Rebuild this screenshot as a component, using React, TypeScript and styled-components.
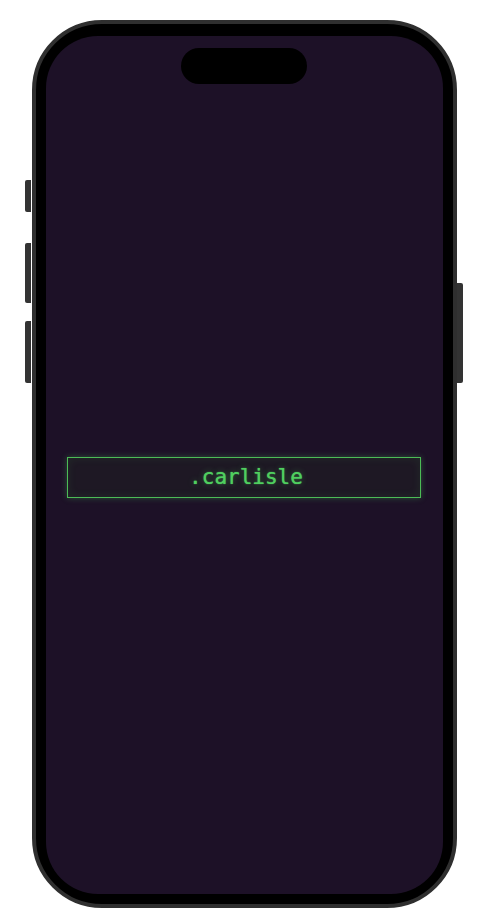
import React from "react";
import styled, { createGlobalStyle } from "styled-components";

const Global = createGlobalStyle`
  html, body { margin: 0; padding: 0; background: #ffffff; }
  body { font-family: "Liberation Sans", Arial, sans-serif; }
`;

const Page = styled.div`
  width: 484px;
  height: 921px;
  display: flex;
  justify-content: flex-start;
  padding: 20px 0 0 32px;
  box-sizing: border-box;
`;

const Frame = styled.div`
  position: relative;
  width: 425px;
  height: 888px;
  box-sizing: border-box;
  border: 4px solid #2f2f2f;
  border-radius: 70px;
  background: #000;
  padding: 12px 10px 10px 10px;
  display: flex;
`;

const SideButton = styled.div<{ $side: "left" | "right"; $top: number; $h: number }>`
  position: absolute;
  ${(p) => (p.$side === "left" ? "left: -11px;" : "right: -10px;")}
  top: ${(p) => p.$top}px;
  width: 6px;
  height: ${(p) => p.$h}px;
  background: #333333;
  border-radius: ${(p) => (p.$side === "left" ? "2px 0 0 2px" : "0 2px 2px 0")};
`;

const Screen = styled.div`
  flex: 1;
  background: #1d1127;
  border-radius: 52px;
  display: flex;
  flex-direction: column;
  align-items: center;
  padding: 12px 22px 0 21px;
  overflow: hidden;
`;

const Island = styled.div`
  flex: none;
  width: 126px;
  height: 36px;
  border-radius: 18px;
  background: #000;
`;

const Content = styled.div`
  flex: 1;
  align-self: stretch;
  display: flex;
  flex-direction: column;
  justify-content: center;
  padding-bottom: 23px;
`;

const NameBox = styled.div`
  height: 41px;
  box-sizing: border-box;
  border: 1px solid #4cbb56;
  box-shadow: 0 0 6px rgba(76, 195, 90, 0.35), inset 0 0 10px rgba(76, 195, 90, 0.1);
  background: #1e1824;
  display: flex;
  align-items: center;
  justify-content: center;
`;

const Name = styled.span`
  font-family: "DejaVu Sans Mono", "Liberation Mono", monospace;
  font-size: 21px;
  font-weight: 400;
  color: #4fcf5f;
  text-shadow: 0 0 1px #4fcf5f, 0 0 6px rgba(79, 209, 97, 0.45);
  line-height: 1;
  padding-left: 4px;
`;

export default function App() {
  return (
    <>
      <Global />
      <Page>
        <Frame>
          <SideButton $side="left" $top={156} $h={32} />
          <SideButton $side="left" $top={219} $h={60} />
          <SideButton $side="left" $top={297} $h={62} />
          <SideButton $side="right" $top={259} $h={100} />
          <Screen>
            <Island />
            <Content>
              <NameBox>
                <Name>.carlisle</Name>
              </NameBox>
            </Content>
          </Screen>
        </Frame>
      </Page>
    </>
  );
}
